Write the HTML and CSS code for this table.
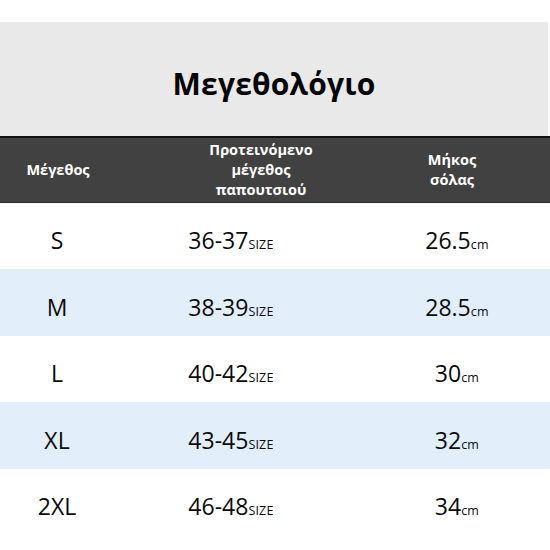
FILE: index.html
```html
<!DOCTYPE html>
<html lang="el">
<head>
<meta charset="utf-8">
<link rel="stylesheet" href="styles.css">
</head>
<body>
<div class="chart">
  <div class="title-band"><h1 class="title">Μεγεθολόγιο</h1></div>
  <div class="head">
    <div class="hc c1">Μέγεθος</div>
    <div class="hc c2">Προτεινόμενο<br>μέγεθος<br>παπουτσιού</div>
    <div class="hc c3">Μήκος<br>σόλας</div>
  </div>
  <div class="row">
    <div class="c1">S</div>
    <div class="c2">36-37<small>SIZE</small></div>
    <div class="c3">26.5<small>cm</small></div>
  </div>
  <div class="row alt">
    <div class="c1">M</div>
    <div class="c2">38-39<small>SIZE</small></div>
    <div class="c3">28.5<small>cm</small></div>
  </div>
  <div class="row">
    <div class="c1">L</div>
    <div class="c2">40-42<small>SIZE</small></div>
    <div class="c3">30<small>cm</small></div>
  </div>
  <div class="row alt">
    <div class="c1">XL</div>
    <div class="c2">43-45<small>SIZE</small></div>
    <div class="c3">32<small>cm</small></div>
  </div>
  <div class="row">
    <div class="c1">2XL</div>
    <div class="c2">46-48<small>SIZE</small></div>
    <div class="c3">34<small>cm</small></div>
  </div>
</div>
</body>
</html>
```
FILE: styles.css
```css
html, body {
  margin: 0;
  padding: 0;
  background: #ffffff;
}
body {
  font-family: "Open Sans", "Noto Sans", sans-serif;
  color: #0a0a0a;
}
.chart {
  width: 550px;
  height: 550px;
  overflow: hidden;
  padding-top: 22px;
  box-sizing: border-box;
}
.title-band {
  width: 548px;
  height: 114px;
  background: #e9e9e9;
  display: flex;
  align-items: center;
  justify-content: center;
  padding-top: 8px;
  box-sizing: border-box;
}
.title {
  margin: 0;
  font-size: 30px;
  font-weight: 700;
  color: #050505;
  letter-spacing: 0.2px;
}
.head {
  display: grid;
  grid-template-columns: 114px 240px 196px;
  height: 67px;
  background: #414141;
  border-top: 2px solid #111;
  border-bottom: 1px solid #2a2a2a;
  box-sizing: border-box;
  color: #fff;
  font-weight: 700;
  font-size: 14.5px;
  line-height: 20px;
}
.hc {
  display: flex;
  align-items: center;
  justify-content: center;
  text-align: center;
}
.hc.c1 { padding-left: 2px; }
.hc.c2 { padding-left: 54px; }
.row {
  display: grid;
  grid-template-columns: 114px 240px 196px;
  height: 67px;
  align-items: center;
  font-size: 23px;
  font-weight: 500;
  line-height: 1;
  padding-top: 9px;
  box-sizing: border-box;
}
.row:nth-child(odd) { height: 66px; }
.row.alt { background: #e3eefb; }
.c1, .c2, .c3 { text-align: center; }
.row .c2 { padding-right: 6px; }
.row .c3 { padding-left: 10px; }
small {
  font-size: 12.5px;
  letter-spacing: 0.2px;
}
```
